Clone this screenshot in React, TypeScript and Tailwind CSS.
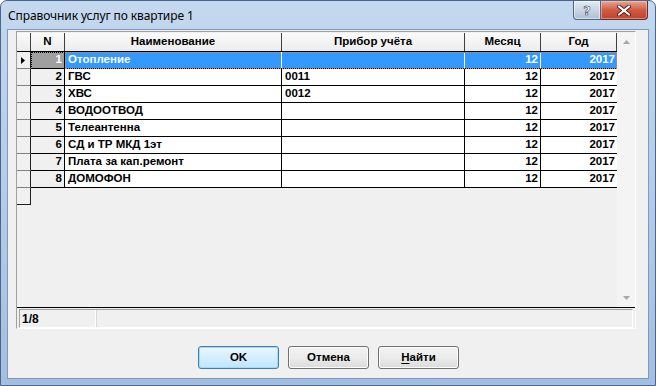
import React from 'react';

type Row = { n: number; name: string; dev: string; m: string; y: string };

const rows: Row[] = [
  { n: 1, name: 'Отопление', dev: '', m: '12', y: '2017' },
  { n: 2, name: 'ГВС', dev: '0011', m: '12', y: '2017' },
  { n: 3, name: 'ХВС', dev: '0012', m: '12', y: '2017' },
  { n: 4, name: 'ВОДООТВОД', dev: '', m: '12', y: '2017' },
  { n: 5, name: 'Телеантенна', dev: '', m: '12', y: '2017' },
  { n: 6, name: 'СД и ТР МКД 1эт', dev: '', m: '12', y: '2017' },
  { n: 7, name: 'Плата за кап.ремонт', dev: '', m: '12', y: '2017' },
  { n: 8, name: 'ДОМОФОН', dev: '', m: '12', y: '2017' },
];

const font = "font-['Liberation_Sans',Arial,sans-serif]";

function HeaderCell({ w, children }: { w: string; children?: React.ReactNode }) {
  return (
    <div
      className={`${w} h-full shrink-0 flex items-center justify-center border-r border-r-[#404040] bg-gradient-to-b from-[#fbfbfb] to-[#ececec] text-[11.5px] font-bold text-black`}
    >
      {children}
    </div>
  );
}

function GridRow({ r }: { r: Row }) {
  const sel = r.n === 1;
  const cell = sel ? 'bg-[#3399ff] text-white border-r-white' : 'bg-white text-black border-r-black';
  const line = sel ? 'border-b-[#3399ff]' : 'border-b-black';
  return (
    <div className="flex h-[17px] text-[11.5px] font-bold leading-none">
      <div className="w-[14px] shrink-0 flex items-center pl-[4px] bg-[#f0f0f0] border-r border-r-[#202020] border-b border-b-[#808080]">
        {sel && (
          <svg width="4" height="7" viewBox="0 0 4 7">
            <path d="M0 0 L4 3.5 L0 7 Z" fill="#000" />
          </svg>
        )}
      </div>
      <div
        className={`w-[34px] shrink-0 flex items-center justify-end pr-[2px] border-r border-r-black border-b border-b-black ${
          sel ? 'bg-[#a0a0a0] text-white outline outline-1 outline-dotted outline-black -outline-offset-1' : 'bg-[#f0f0f0] text-black'
        }`}
      >
        {r.n}
      </div>
      <div
        className={`flex ${sel ? 'outline outline-1 outline-dotted outline-[#d9884a] -outline-offset-1 border-b border-b-black' : ''}`}
      >
        <div className={`w-[217px] shrink-0 flex items-center pl-[3px] border-r ${sel ? '' : 'border-b'} ${line} ${cell}`}>
          {r.name}
        </div>
        <div className={`w-[183px] shrink-0 flex items-center pl-[3px] border-r ${sel ? '' : 'border-b'} ${line} ${cell}`}>
          {r.dev}
        </div>
        <div className={`w-[76px] shrink-0 flex items-center justify-end pr-[2px] border-r ${sel ? '' : 'border-b'} ${line} ${cell}`}>
          {r.m}
        </div>
        <div className={`w-[76px] shrink-0 flex items-center justify-end pr-[2px] ${sel ? '' : 'border-b'} ${line} ${cell}`}>
          {r.y}
        </div>
      </div>
    </div>
  );
}

function Btn({ children, def }: { children: React.ReactNode; def?: boolean }) {
  return (
    <button
      className={`w-[81px] h-[23px] rounded-[3px] border text-[11.5px] font-bold text-black flex items-center justify-center ${
        def
          ? 'border-[#3c7fb1] bg-gradient-to-b from-[#eaf6fd] to-[#bee6fd] shadow-[inset_0_0_0_1px_#a7d9f5]'
          : 'border-[#707070] bg-gradient-to-b from-[#f2f2f2] via-[#ebebeb] to-[#dbdbdb] shadow-[inset_0_0_0_1px_#fcfcfc]'
      }`}
    >
      {children}
    </button>
  );
}

export default function App() {
  return (
    <div className={`w-[656px] h-[386px] ${font} bg-white`}>
      <div className="relative w-full h-full flex flex-col rounded-t-[7px] border border-[#4a668a] bg-gradient-to-b from-[#c4d8ef] via-[#b3cce9] to-[#a2bfe2] px-[6px] pb-[6px]">
        {/* Title bar */}
        <div className="h-[28px] shrink-0 flex items-center pl-[1px] pt-[1px]">
          <span className="text-[12px] text-black font-['Noto_Sans',sans-serif] tracking-[-0.1px]">
            Справочник услуг по квартире 1
          </span>
        </div>

        {/* Caption buttons */}
        <div className="absolute top-0 right-[7px] flex h-[19px]">
          <div className="w-[28px] h-full border border-t-0 border-[#4f6680] rounded-bl-[4px] bg-gradient-to-b from-[#e3ebf5] via-[#c9d6e6] to-[#aebfd4] flex items-center justify-center shadow-[inset_0_0_0_1px_rgba(255,255,255,0.5)]">
            <span className="text-[13px] font-bold text-white leading-none [-webkit-text-stroke:0.6px_#3b4d66] font-['DejaVu_Sans',sans-serif]">
              ?
            </span>
          </div>
          <div className="w-[47px] h-full border border-t-0 border-l-0 border-[#6b2a22] rounded-br-[4px] bg-gradient-to-b from-[#e8a595] via-[#cf5a45] to-[#c0432d] flex items-center justify-center shadow-[inset_0_0_0_1px_rgba(255,220,210,0.45)]">
            <svg width="14" height="11" viewBox="0 0 14 11">
              <path d="M2 1.5 L12 9.5 M12 1.5 L2 9.5" stroke="#5a2018" strokeWidth="4" strokeLinecap="round" />
              <path d="M2 1.5 L12 9.5 M12 1.5 L2 9.5" stroke="#ffffff" strokeWidth="2.2" strokeLinecap="round" />
            </svg>
          </div>
        </div>

        {/* Client area */}
        <div className="flex-1 flex flex-col border border-[#7f9ab9] bg-[#f0f0f0]">
          {/* Grid panel */}
          <div className="ml-[8px] mt-[1px] w-[620px] h-[298px] flex flex-col border border-t-[#a0a0a0] border-l-[#a0a0a0] border-r-white border-b-white pt-[1px]">
            <div className="flex-1 flex min-h-0">
              <div className="w-[600px] flex flex-col">
                {/* Header */}
                <div className="flex h-[19px] border-b border-b-black">
                  <HeaderCell w="w-[14px]" />
                  <HeaderCell w="w-[34px]">N</HeaderCell>
                  <HeaderCell w="w-[217px]">Наименование</HeaderCell>
                  <HeaderCell w="w-[183px]">Прибор учёта</HeaderCell>
                  <HeaderCell w="w-[76px]">Месяц</HeaderCell>
                  <HeaderCell w="w-[76px]">Год</HeaderCell>
                </div>
                {rows.map((r) => (
                  <GridRow key={r.n} r={r} />
                ))}
                <div className="w-[14px] h-[17px] bg-[#f0f0f0] border-r border-r-[#202020] border-b border-b-[#202020]" />
              </div>
              {/* Scrollbar */}
              <div className="w-[18px] flex flex-col items-center justify-between bg-[#f4f4f4] py-[7px]">
                <svg width="7" height="4" viewBox="0 0 7 4">
                  <path d="M0 4 L3.5 0 L7 4 Z" fill="#a8a8a8" />
                </svg>
                <svg width="7" height="4" viewBox="0 0 7 4">
                  <path d="M0 0 L3.5 4 L7 0 Z" fill="#a8a8a8" />
                </svg>
              </div>
            </div>
            {/* Status bar */}
            <div className="h-[21px] shrink-0 border-t border-t-black pt-[1px] px-[2px]">
              <div className="h-[19px] flex border border-t-[#a0a0a0] border-l-[#a0a0a0] border-r-white border-b-white">
                <div className="w-[76px] h-full flex items-center pl-[2px] text-[12px] font-bold text-black border-r border-r-white">
                  1/8
                </div>
                <div className="flex-1 border-l border-l-[#d8d8d8]" />
              </div>
            </div>
          </div>

          {/* Buttons */}
          <div className="mt-[17px] flex justify-center gap-[9px] pl-[1px]">
            <Btn def>OK</Btn>
            <Btn>Отмена</Btn>
            <Btn>
              <span className="underline underline-offset-2">Н</span>айти
            </Btn>
          </div>
        </div>
      </div>
    </div>
  );
}
